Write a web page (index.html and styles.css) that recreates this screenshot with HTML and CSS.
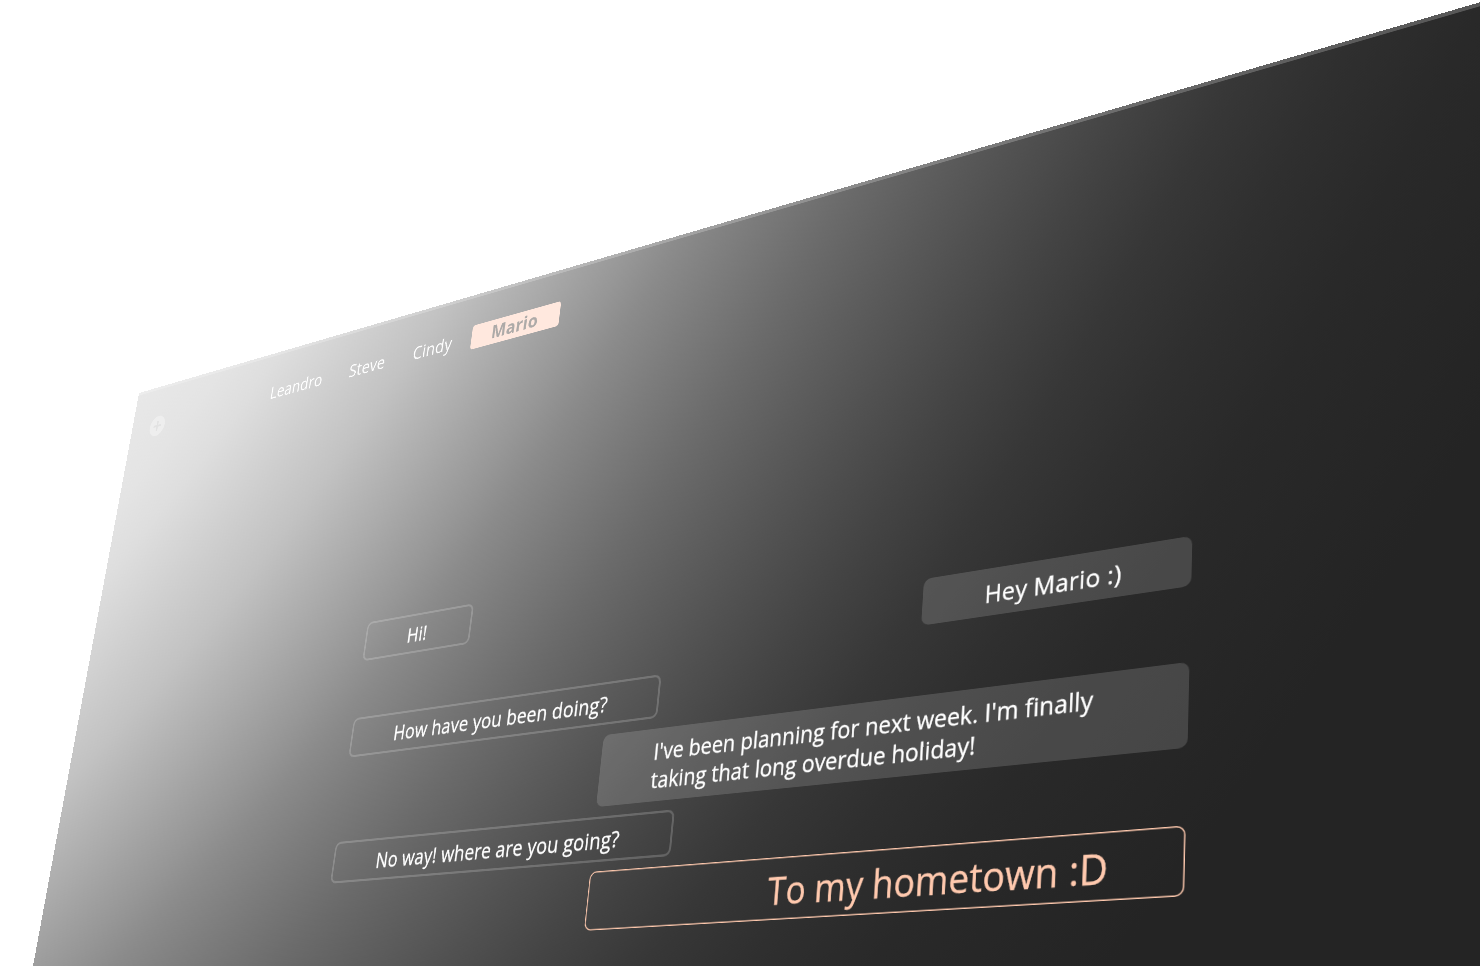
FILE: index.html
```html
<!DOCTYPE html>
<html lang="en">
<head>
<meta charset="utf-8">
<title>Messages</title>
<link rel="stylesheet" href="styles.css">
</head>
<body>
<main class="app">
  <header class="topbar">
    <svg class="add" viewBox="0 0 40 40"><circle cx="20" cy="20" r="20" fill="#eeeeee"/><path d="M20 10v20M10 20h20" stroke="#e2e2e2" stroke-width="4"/></svg>
    <nav class="contacts">
      <a class="contact">Leandro</a>
      <a class="contact">Steve</a>
      <a class="contact">Cindy</a>
      <a class="contact active">Mario</a>
    </nav>
  </header>
  <section class="chat">
    <p class="msg theirs">Hi!</p>
    <p class="msg mine">Hey Mario :)</p>
    <p class="msg theirs">How have you been doing?</p>
    <p class="msg mine long">I've been planning for next week. I'm finally<br>taking that long overdue holiday!</p>
    <p class="msg theirs">No way! where are you going?</p>
    <p class="msg draft">To my hometown :D</p>
  </section>
</main>
</body>
</html>
```
FILE: styles.css
```css
html, body {
  margin: 0;
  height: 966px;
  overflow: hidden;
  background: #fff;
}

.app {
  box-sizing: border-box;
  width: 2400px;
  height: 1140px;
  border-top: 5px solid rgba(255, 255, 255, 0.22);
  font: 29px/37px "Open Sans", "Noto Sans", sans-serif;
  letter-spacing: 0.2px;
  color: #fff;
  background:
    radial-gradient(circle 5000px at -2000px -2000px,
      #e8e8e8 2828px, #e4e4e4 2974px, #dedede 3073px, #d5d5d5 3162px,
      #c2c2c2 3342px, #ababab 3495px, #979797 3621px, #8b8b8b 3690px,
      #7c7c7c 3794px, #6b6b6b 3916px, #5f5f5f 4012px, #515151 4127px,
      #444444 4239px, #373737 4363px, #2f2f2f 4480px, #292929 4606px,
      #242424 4833px) border-box;
  transform-origin: 0 0;
  transform: matrix3d(
    0.378333, -0.1825, 0, -0.000166667,
    -0.112167, 0.511167, 0, -0.0000833333,
    0, 0, 1, 0,
    139, 393, 0, 1);
}

.topbar {
  display: flex;
  height: 488px;
}

.add {
  width: 42px;
  height: 36px;
  margin: 50px 0 0 42px;
}

.contacts {
  display: flex;
  align-items: flex-start;
  margin: 46px 0 0 222px;
  gap: 18px;
}

.contact { padding: 0 19px; }

.active {
  padding: 0 39px 2px 38px;
  border-radius: 5px;
  background: #ffe8de;
  color: #adaaa8;
  font-weight: 700;
}

.chat {
  display: flex;
  flex-direction: column;
  gap: 13.5px;
  width: 1226px;
  margin-left: 612px;
}

.msg {
  box-sizing: border-box;
  margin: 0;
  border-radius: 10px;
  padding: 11.5px 80px 9.5px;
  letter-spacing: 0.3px;
  -webkit-text-stroke: 0.4px currentColor;
}

.theirs {
  align-self: flex-start;
  border: 3px solid rgba(255, 255, 255, 0.19);
  padding: 8.5px 78px 7px;
}

.mine {
  align-self: flex-end;
  background: rgba(255, 255, 255, 0.15);
}

.long {
  width: 776px;
  padding-left: 82px;
  padding-right: 0;
  letter-spacing: 0.1px;
}

.draft {
  align-self: flex-end;
  width: 774px;
  margin-top: -1px;
  box-shadow: inset 0 0 0 1.5px #ffc9ae;
  padding: 12.5px 84px 9px 0;
  color: #ffc9ae;
  font-size: 45px;
  line-height: 53px;
  text-align: right;
  letter-spacing: 0.05px;
}
```
